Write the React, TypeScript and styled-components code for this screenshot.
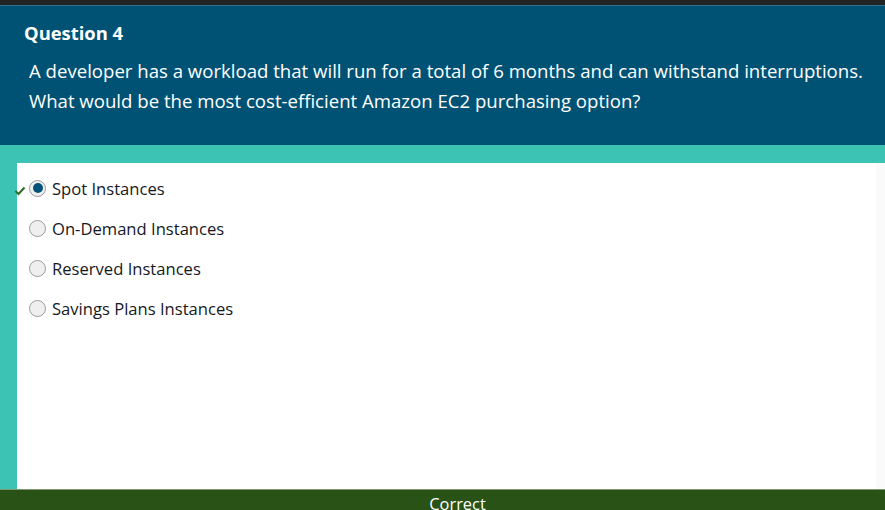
import React from "react";
import styled, { createGlobalStyle } from "styled-components";

const Global = createGlobalStyle`
  html, body { margin: 0; padding: 0; background: #ffffff; }
  body { font-family: "Open Sans", "Noto Sans", sans-serif; overflow: hidden; }
`;

const Page = styled.div`
  width: 885px;
  height: 510px;
  display: flex;
  flex-direction: column;
  overflow: hidden;
  background: #3cc3b4;
`;

const TopBar = styled.div`
  height: 5px;
  background: #232323;
  border-bottom: 1px solid #2f6f8f;
  flex: none;
`;

const Header = styled.div`
  background: #005275;
  color: #ffffff;
  padding: 15px 0 0 24px;
  height: 139px;
  flex: none;
  box-sizing: border-box;
  white-space: nowrap;
`;

const Title = styled.div`
  font-weight: 700;
  font-size: 18.4px;
  line-height: 24px;
  margin-bottom: 11px;
`;

const QuestionText = styled.div`
  font-size: 18.6px;
  line-height: 30px;
  padding-left: 5px;
  font-weight: 500;
`;

const Body = styled.div`
  flex: 1;
  display: flex;
  padding-top: 18px;
  padding-left: 17px;
  min-height: 0;
`;

const Panel = styled.div`
  flex: 1;
  background: #ffffff;
  display: flex;
  flex-direction: column;
  padding-top: 5px;
  border-right: 9px solid #fafafa;
`;

const Option = styled.label`
  position: relative;
  display: flex;
  align-items: center;
  height: 40px;
  padding-left: 12px;
  font-size: 16.6px;
  color: #16191f;
`;

const Check = styled.span`
  position: absolute;
  left: -3px;
  top: 11px;
  width: 12px;
  height: 12px;
`;

const Radio = styled.span<{ $checked: boolean }>`
  width: 17px;
  height: 17px;
  box-sizing: border-box;
  border-radius: 50%;
  border: 1px solid #9a9a9a;
  background: #efefef;
  margin-right: 6px;
  display: flex;
  align-items: center;
  justify-content: center;
  &::after {
    content: "";
    width: 10px;
    height: 10px;
    border-radius: 50%;
    background: #00527a;
    display: ${(p) => (p.$checked ? "block" : "none")};
  }
`;

const Footer = styled.div`
  height: 20px;
  flex: none;
  background: #285216;
  border-top: 1px solid #7f9a73;
  color: #ffffff;
  text-align: center;
  font-size: 16.4px;
  line-height: 28px;
  overflow: hidden;
  padding-left: 30px;
`;

const options = [
  { label: "Spot Instances", checked: true },
  { label: "On-Demand Instances", checked: false },
  { label: "Reserved Instances", checked: false },
  { label: "Savings Plans Instances", checked: false },
];

export default function App() {
  return (
    <Page>
      <Global />
      <TopBar />
      <Header>
        <Title>Question 4</Title>
        <QuestionText>
          A developer has a workload that will run for a total of 6 months and can withstand interruptions.
          <br />
          What would be the most cost-efficient Amazon EC2 purchasing option?
        </QuestionText>
      </Header>
      <Body>
        <Panel>
          {options.map((o) => (
            <Option key={o.label}>
              {o.checked && (
                <Check>
                  <svg width="12" height="12" viewBox="0 0 12 12">
                    <path d="M1.5 6 L4.5 9 L10.5 2.5" fill="none" stroke="#2d6b1f" strokeWidth="2" />
                  </svg>
                </Check>
              )}
              <Radio $checked={o.checked} />
              {o.label}
            </Option>
          ))}
        </Panel>
      </Body>
      <Footer>Correct</Footer>
    </Page>
  );
}
